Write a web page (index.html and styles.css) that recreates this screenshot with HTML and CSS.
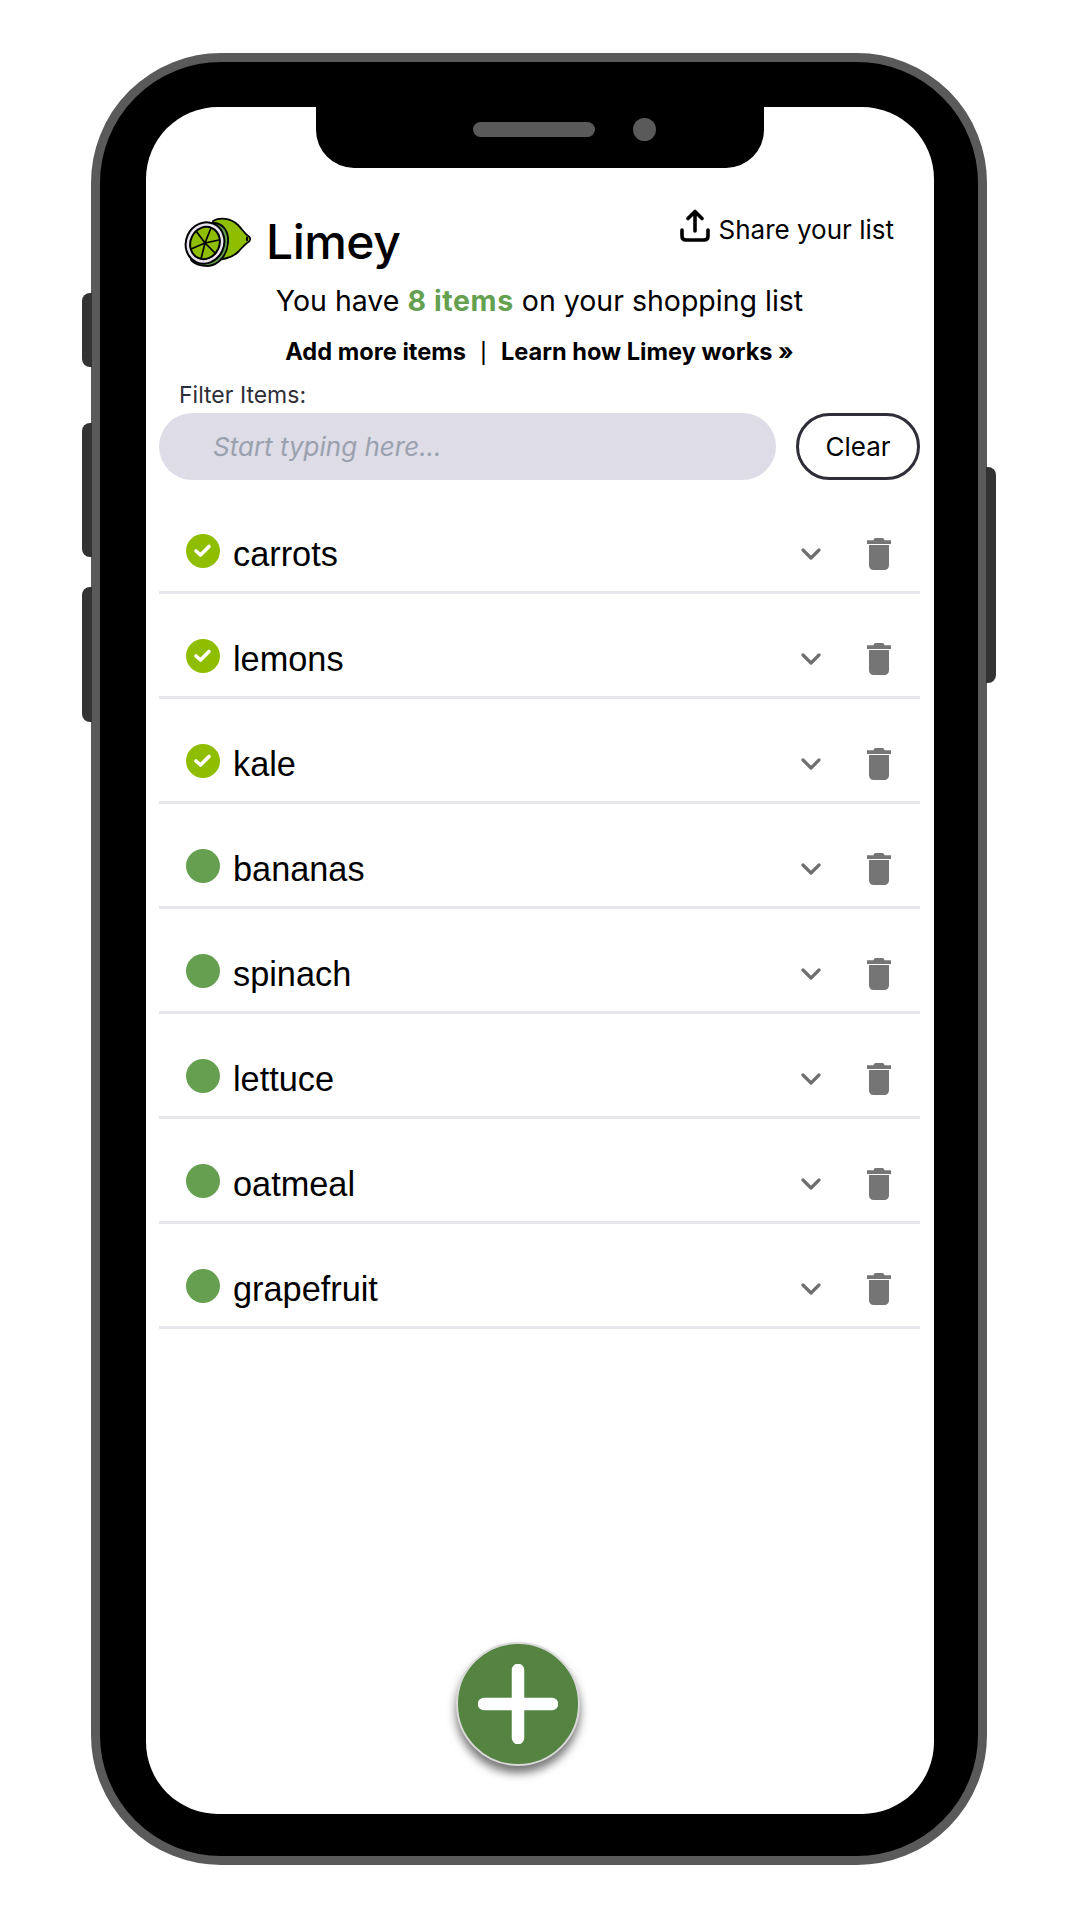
FILE: index.html
```html
<!DOCTYPE html>
<html lang="en">
<head>
<meta charset="utf-8">
<title>Limey</title>
<link rel="stylesheet" href="styles.css">
</head>
<body>
<div class="device">
  <span class="side side-l1"></span>
  <span class="side side-l2"></span>
  <span class="side side-l3"></span>
  <span class="side side-r1"></span>
  <div class="bezel">
    <div class="notch"><span class="speaker"></span><span class="camera"></span></div>
    <main class="screen">
      <header class="top">
        <div class="brand">
          <svg class="logo" viewBox="0 0 68 50" aria-hidden="true">
            <path d="M29 4C36 0 47 1 54 8C58 12 61 17 65 19.500C66.500 21 66.500 23 65 24.500C61 27 58 31 54 35C47 42 36 43 29 42Z" fill="#8fbe00" stroke="#000" stroke-width="1.800" stroke-linejoin="round"/>
            <ellipse cx="63" cy="22" rx="1.100" ry="2.400" fill="#000"/>
            <path d="M29 6C39 6 45 14 44 26C43 38 35 48 24 49C16 49 10 47 7 43Z" fill="#5f9e4d" stroke="#000" stroke-width="1.800"/>
            <ellipse cx="21" cy="26" rx="19" ry="21" transform="rotate(25 21 26)" fill="#e9e4f2" stroke="#000" stroke-width="2"/>
            <ellipse cx="21" cy="26" rx="14.500" ry="16.500" transform="rotate(25 21 26)" fill="#8fbe00" stroke="#000" stroke-width="2"/>
            <path d="M21 26L27 11M21 26L35 23M21 26L32 37M21 26L17 42M21 26L7 32M21 26L12 14" stroke="#000" stroke-width="1.700" fill="none"/>
          </svg>
          <h1 class="title">Limey</h1>
        </div>
        <a class="share">
          <svg class="share-icon" viewBox="0 0 30 34" aria-hidden="true">
            <path d="M15 22V3M8 9.500L15 2.500L22 9.500M2 21V27C2 29.500 3.500 31 6 31H24C26.500 31 28 29.500 28 27V21" fill="none" stroke="#000" stroke-width="3.600" stroke-linecap="round" stroke-linejoin="round"/>
          </svg>
          <span class="share-text">Share your list</span>
        </a>
      </header>
      <p class="summary">You have <strong class="count">8 items</strong> on your shopping list</p>
      <p class="links"><a>Add more items</a><span class="pipe">|</span><a>Learn how Limey works »</a></p>
      <label class="filter-label" for="filter">Filter Items:</label>
      <div class="filter-row">
        <input class="filter-input" id="filter" type="text" placeholder="Start typing here...">
        <button class="clear" type="button">Clear</button>
      </div>
      <ul class="items">
        <li class="item"><span class="check done"><svg viewBox="0 0 34 34"><path d="M10 17L14.500 21L23 12.500" fill="none" stroke="#fff" stroke-width="3.600" stroke-linecap="round" stroke-linejoin="round"/></svg></span><span class="name">carrots</span><svg class="chev" viewBox="0 0 20 12"><path d="M2 2L10 10L18 2" fill="none" stroke="#6f6f6f" stroke-width="3.200" stroke-linecap="round" stroke-linejoin="round"/></svg><svg class="trash" viewBox="0 0 24 32"><path d="M8.500 0H15.500C16.500 0 17 .8 17.500 2.200H24V6H0V2.200H6.500C7 .8 7.500 0 8.500 0ZM2 7H22V27.500C22 30 20 32 17.500 32H6.500C4 32 2 30 2 27.500Z" fill="#757575"/></svg></li>
        <li class="item"><span class="check done"><svg viewBox="0 0 34 34"><path d="M10 17L14.500 21L23 12.500" fill="none" stroke="#fff" stroke-width="3.600" stroke-linecap="round" stroke-linejoin="round"/></svg></span><span class="name">lemons</span><svg class="chev" viewBox="0 0 20 12"><path d="M2 2L10 10L18 2" fill="none" stroke="#6f6f6f" stroke-width="3.200" stroke-linecap="round" stroke-linejoin="round"/></svg><svg class="trash" viewBox="0 0 24 32"><path d="M8.500 0H15.500C16.500 0 17 .8 17.500 2.200H24V6H0V2.200H6.500C7 .8 7.500 0 8.500 0ZM2 7H22V27.500C22 30 20 32 17.500 32H6.500C4 32 2 30 2 27.500Z" fill="#757575"/></svg></li>
        <li class="item"><span class="check done"><svg viewBox="0 0 34 34"><path d="M10 17L14.500 21L23 12.500" fill="none" stroke="#fff" stroke-width="3.600" stroke-linecap="round" stroke-linejoin="round"/></svg></span><span class="name">kale</span><svg class="chev" viewBox="0 0 20 12"><path d="M2 2L10 10L18 2" fill="none" stroke="#6f6f6f" stroke-width="3.200" stroke-linecap="round" stroke-linejoin="round"/></svg><svg class="trash" viewBox="0 0 24 32"><path d="M8.500 0H15.500C16.500 0 17 .8 17.500 2.200H24V6H0V2.200H6.500C7 .8 7.500 0 8.500 0ZM2 7H22V27.500C22 30 20 32 17.500 32H6.500C4 32 2 30 2 27.500Z" fill="#757575"/></svg></li>
        <li class="item"><span class="check"></span><span class="name">bananas</span><svg class="chev" viewBox="0 0 20 12"><path d="M2 2L10 10L18 2" fill="none" stroke="#6f6f6f" stroke-width="3.200" stroke-linecap="round" stroke-linejoin="round"/></svg><svg class="trash" viewBox="0 0 24 32"><path d="M8.500 0H15.500C16.500 0 17 .8 17.500 2.200H24V6H0V2.200H6.500C7 .8 7.500 0 8.500 0ZM2 7H22V27.500C22 30 20 32 17.500 32H6.500C4 32 2 30 2 27.500Z" fill="#757575"/></svg></li>
        <li class="item"><span class="check"></span><span class="name">spinach</span><svg class="chev" viewBox="0 0 20 12"><path d="M2 2L10 10L18 2" fill="none" stroke="#6f6f6f" stroke-width="3.200" stroke-linecap="round" stroke-linejoin="round"/></svg><svg class="trash" viewBox="0 0 24 32"><path d="M8.500 0H15.500C16.500 0 17 .8 17.500 2.200H24V6H0V2.200H6.500C7 .8 7.500 0 8.500 0ZM2 7H22V27.500C22 30 20 32 17.500 32H6.500C4 32 2 30 2 27.500Z" fill="#757575"/></svg></li>
        <li class="item"><span class="check"></span><span class="name">lettuce</span><svg class="chev" viewBox="0 0 20 12"><path d="M2 2L10 10L18 2" fill="none" stroke="#6f6f6f" stroke-width="3.200" stroke-linecap="round" stroke-linejoin="round"/></svg><svg class="trash" viewBox="0 0 24 32"><path d="M8.500 0H15.500C16.500 0 17 .8 17.500 2.200H24V6H0V2.200H6.500C7 .8 7.500 0 8.500 0ZM2 7H22V27.500C22 30 20 32 17.500 32H6.500C4 32 2 30 2 27.500Z" fill="#757575"/></svg></li>
        <li class="item"><span class="check"></span><span class="name">oatmeal</span><svg class="chev" viewBox="0 0 20 12"><path d="M2 2L10 10L18 2" fill="none" stroke="#6f6f6f" stroke-width="3.200" stroke-linecap="round" stroke-linejoin="round"/></svg><svg class="trash" viewBox="0 0 24 32"><path d="M8.500 0H15.500C16.500 0 17 .8 17.500 2.200H24V6H0V2.200H6.500C7 .8 7.500 0 8.500 0ZM2 7H22V27.500C22 30 20 32 17.500 32H6.500C4 32 2 30 2 27.500Z" fill="#757575"/></svg></li>
        <li class="item"><span class="check"></span><span class="name">grapefruit</span><svg class="chev" viewBox="0 0 20 12"><path d="M2 2L10 10L18 2" fill="none" stroke="#6f6f6f" stroke-width="3.200" stroke-linecap="round" stroke-linejoin="round"/></svg><svg class="trash" viewBox="0 0 24 32"><path d="M8.500 0H15.500C16.500 0 17 .8 17.500 2.200H24V6H0V2.200H6.500C7 .8 7.500 0 8.500 0ZM2 7H22V27.500C22 30 20 32 17.500 32H6.500C4 32 2 30 2 27.500Z" fill="#757575"/></svg></li>
      </ul>
      <button class="fab" type="button" aria-label="Add item">
        <svg class="plus" viewBox="0 0 80 80"><path d="M6 40H74M40 6V74" fill="none" stroke="#fff" stroke-width="12.500" stroke-linecap="round"/></svg>
      </button>
    </main>
  </div>
</div>
</body>
</html>
```
FILE: styles.css
```css
* { box-sizing: border-box; }
html, body { margin: 0; padding: 0; background: #fff; }
body { width: 1080px; height: 1920px; padding: 53px 93px 55px 91px; font-family: Inter, "Liberation Sans", sans-serif; color: #000; }
p, h1, ul { margin: 0; padding: 0; }

.device { position: relative; width: 896px; height: 1812px; }
.bezel { width: 100%; height: 100%; background: #000; border: 9px solid #5a5a5a; border-radius: 130px; padding: 45px 44px 42px 46px; }
.side { position: absolute; width: 10px; background: #333; }
.side-l1 { left: -9px; top: 240px; height: 74px; border-radius: 8px 0 0 8px; }
.side-l2 { left: -9px; top: 370px; height: 134px; border-radius: 8px 0 0 8px; }
.side-l3 { left: -9px; top: 534px; height: 135px; border-radius: 8px 0 0 8px; }
.side-r1 { right: -9px; top: 414px; height: 216px; border-radius: 0 8px 8px 0; }

.notch { position: absolute; left: 225px; top: 54px; width: 448px; height: 61px; background: #000; border-radius: 0 0 38px 38px; z-index: 2; display: flex; align-items: center; justify-content: flex-end; gap: 38px; padding: 0 108px 16px 0; }
.speaker { width: 122px; height: 15px; border-radius: 8px; background: #5a5a5a; }
.camera { width: 23px; height: 23px; border-radius: 50%; background: #5a5a5a; }

.screen { position: relative; height: 100%; background: #fff; border-radius: 72px; padding: 105px 14px 0 13px; overflow: hidden; }

.top { display: flex; justify-content: space-between; align-items: flex-start; padding: 0 26px 0 25px; height: 69px; }
.brand { display: flex; align-items: center; gap: 14px; margin-top: 1px; }
.logo { width: 68px; height: 50px; }
.title { font-size: 48px; font-weight: 500; line-height: 58px; letter-spacing: -.5px; }
.share { display: flex; align-items: flex-start; gap: 9px; font-size: 26px; line-height: 34px; margin-top: -3px; }
.share-icon { width: 30px; height: 34px; }
.share-text { margin-top: 4px; }

.summary { font-size: 28.500px; line-height: 40px; text-align: center; }
.count { color: #659f50; font-weight: 700; letter-spacing: .6px; }
.links { margin-top: 14px; font-size: 23.600px; line-height: 34px; font-weight: 700; text-align: center; }
.pipe { font-size: 20px; font-weight: 500; margin: 0 14px; }

.filter-label { display: block; margin: 10px 0 0 20px; font-size: 23px; line-height: 30px; color: #2e2e38; }
.filter-row { display: flex; gap: 20px; margin-top: 3px; }
.filter-input { flex: 1; min-width: 0; height: 67px; border: 0; border-radius: 34px; background: #dddce7; padding: 0 54px; font: italic 26px Inter, "Liberation Sans", sans-serif; outline: none; }
.filter-input::placeholder { color: #9aa1ae; opacity: 1; }
.clear { width: 124px; height: 67px; border: 3px solid #2e2e38; border-radius: 34px; background: #fff; font: 26px Inter, "Liberation Sans", sans-serif; color: #000; padding: 0; }

.items { list-style: none; margin-top: 9px; }
.item { display: flex; align-items: center; height: 105px; border-bottom: 3px solid #e6e6ec; padding: 29px 29px 0 27px; }
.check { width: 34px; height: 34px; border-radius: 50%; background: #659f50; flex: none; margin-top: -8px; }
.check svg { display: block; width: 34px; height: 34px; }
.check.done { background: #8fbe00; }
.name { flex: 1; margin-left: 13px; font: 34.300px "Liberation Sans", sans-serif; }
.chev { width: 20px; height: 12px; flex: none; margin: -2px 46px 0 0; }
.trash { width: 24px; height: 32px; flex: none; margin-top: -2px; }

.fab { position: absolute; left: 310px; top: 1535px; width: 124px; height: 124px; border-radius: 50%; border: 2px solid #d9d9d9; background: #548342; box-shadow: 0 7px 10px rgba(0,0,0,.55); padding: 0; display: flex; align-items: center; justify-content: center; }
.plus { width: 80px; height: 80px; display: block; }
```
